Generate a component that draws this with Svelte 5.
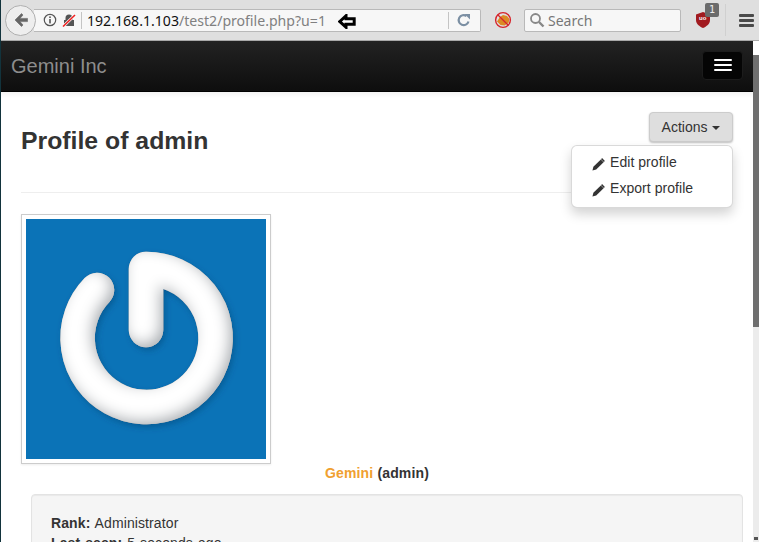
<script>
	let name = 'Gemini'
	let login = 'admin'
	let actions = ['Edit profile', 'Export profile']
</script>

<div class="window">
	<header class="toolbar">
		<button class="back" aria-label="Back">
			<svg width="14" height="14" viewBox="0 0 14 14"><path d="M7.500 0.500 1 7l6.500 6.500 1.500-1.500-3-3.400h7.500V5.400H6L9 2z" fill="#666" stroke="#666" stroke-width="0.600"/></svg>
		</button>
		<div class="urlbar">
			<svg class="info" width="14" height="14" viewBox="0 0 14 14">
				<circle cx="7" cy="7" r="5.700" fill="none" stroke="#555" stroke-width="1.200"/>
				<rect x="6.200" y="6" width="1.600" height="4.400" fill="#555"/>
				<rect x="6.200" y="3.400" width="1.600" height="1.600" fill="#555"/>
			</svg>
			<svg class="lock" width="14" height="14" viewBox="0 0 14 14">
				<path d="M2 13V7h1.500V5a3.500 3.500 0 0 1 7 0v2H12v6z" fill="#555"/>
				<path d="M1 13.500 13 2" stroke="#fff" stroke-width="3"/>
				<path d="M1 13.500 13 2" stroke="#e22" stroke-width="1.600"/>
			</svg>
			<span class="sep"></span>
			<span class="url"><b>192.168.1.103</b>/test2/profile.php?u=1</span>
			<svg class="cursor" width="18" height="15" viewBox="0 0 18 15">
				<path d="M1.800 7.500 8 1.800v3h8.200v5.400H8v3z" fill="#fff" stroke="#000" stroke-width="3"/>
			</svg>
			<span class="grow"></span>
			<span class="sep"></span>
			<svg class="reload" width="14" height="14" viewBox="0 0 14 14">
				<path d="M11.500 8.500A5 5 0 1 1 9.500 3" fill="none" stroke="#7b8fa3" stroke-width="2.200"/>
				<path d="M7.500 1h5.500v5.500z" fill="#7b8fa3"/>
			</svg>
		</div>
		<svg class="noscript" width="18" height="18" viewBox="0 0 18 18">
			<path d="M3 10.500 6 6l3-2 4 1 2.500 3-1 4-4 2.500-4-.5z" fill="#dc8a24"/>
			<circle cx="9" cy="9" r="7.400" fill="none" stroke="#d6232a" stroke-width="1.400"/>
			<path d="M4 4l10 10" stroke="#d6232a" stroke-width="1.200"/>
		</svg>
		<div class="search">
			<svg width="16" height="16" viewBox="0 0 16 16">
				<circle cx="6.500" cy="6.500" r="4.500" fill="none" stroke="#888" stroke-width="1.800"/>
				<path d="M10 10l4.500 4.500" stroke="#888" stroke-width="2.400"/>
			</svg>
			<span>Search</span>
		</div>
		<div class="ublock">
			<svg width="14" height="16" viewBox="0 0 14 16">
				<path d="M0 2.500 7 0l7 2.500V8c0 4-3.500 6.500-7 8-3.500-1.500-7-4-7-8z" fill="#a11a1f"/>
			</svg>
			<span class="uo">uo</span>
			<span class="count">1</span>
		</div>
		<span class="divider"></span>
		<div class="menu-icon" aria-label="Menu"><i></i><i></i><i></i></div>
	</header>

	<div class="viewport">
		<main class="page">
			<nav class="navbar">
				<span class="brand">Gemini Inc</span>
				<button class="toggle" aria-label="Toggle"><i></i><i></i><i></i></button>
			</nav>

			<div class="content">
				<div class="page-header">
					<h1>Profile of {login}</h1>
					<div class="actions">
						<button class="btn">Actions <span class="caret"></span></button>
						<ul class="dropdown">
							{#each actions as action}
								<li>
									<svg width="13" height="13" viewBox="0 0 14 14">
										<path d="M0.500 13.500 1.500 9.500 9.500 1.500 12.500 4.500 4.500 12.500z" fill="#333"/>
										<path d="M10.300 0.700 13.300 3.700" stroke="#333" stroke-width="1.600"/>
									</svg>
									<span>{action}</span>
								</li>
							{/each}
						</ul>
					</div>
				</div>

				<div class="thumb">
					<svg width="240" height="240" viewBox="0 0 240 240">
						<defs>
							<filter id="soft" x="-20%" y="-20%" width="140%" height="140%">
								<feGaussianBlur in="SourceAlpha" stdDeviation="7" result="blur"/>
								<feOffset in="blur" dx="-4" dy="-4" result="off"/>
								<feComposite in="SourceAlpha" in2="off" operator="out" result="edge"/>
								<feFlood flood-color="#6b7680" flood-opacity="0.7"/>
								<feComposite in2="edge" operator="in" result="shade"/>
								<feDropShadow in="SourceAlpha" dx="2" dy="3" stdDeviation="3" flood-color="#04406e" flood-opacity="0.45" result="drop"/>
								<feMerge>
									<feMergeNode in="drop"/>
									<feMergeNode in="SourceGraphic"/>
									<feMergeNode in="shade"/>
								</feMerge>
							</filter>
						</defs>
						<rect width="240" height="240" fill="#0b73b7"/>
						<path d="M71 71A69 69 0 1 0 120 50L120 111" fill="none" stroke="#fff" stroke-width="34.500" stroke-linecap="round" stroke-linejoin="round" filter="url(#soft)"/>
					</svg>
				</div>

				<p class="name"><span class="fname">{name}</span> ({login})</p>

				<section class="well">
					<p><b>Rank:</b> Administrator</p>
					<p><b>Last seen:</b> 5 seconds ago</p>
				</section>
			</div>
		</main>
		<aside class="scrollbar">
			<span class="arrow"></span>
			<span class="bar"></span>
			<span class="tick"></span>
		</aside>
	</div>
</div>

<style>
	:global(body) {
		margin: 0;
		overflow: hidden;
	}
	.window {
		width: 759px;
		height: 542px;
		box-sizing: border-box;
		display: flex;
		flex-direction: column;
		overflow: hidden;
		background: #fff;
		border-left: 1px solid #12333c;
		font-family: "Liberation Sans", Arial, sans-serif;
		color: #333;
	}

	/* browser chrome */
	.toolbar {
		height: 40px;
		flex: none;
		box-sizing: border-box;
		display: flex;
		align-items: center;
		background: #dfdfdf;
		padding: 0 0 0 4px;
		font-family: "Noto Sans", "Open Sans", sans-serif;
	}
	.back {
		width: 31px;
		height: 31px;
		flex: none;
		padding: 0;
		border: 1px solid #b0b0b0;
		border-radius: 50%;
		background: #eeeeee;
		display: flex;
		align-items: center;
		justify-content: center;
		position: relative;
		z-index: 1;
		margin-right: -2px;
	}
	.urlbar {
		width: 447px;
		height: 23px;
		box-sizing: border-box;
		flex: none;
		display: flex;
		align-items: center;
		background: #f7f7f7;
		border: 1px solid #b9b9b9;
		border-left: 0;
		border-radius: 0 2px 2px 0;
		padding-left: 9px;
	}
	.info { margin-right: 5px; }
	.lock { margin-right: 5px; }
	.sep {
		width: 1px;
		height: 17px;
		background: #c4c4c4;
		flex: none;
	}
	.url {
		font-size: 14.100px;
		color: #808080;
		margin-left: 5px;
		white-space: nowrap;
	}
	.url b {
		font-weight: 400;
		color: #111;
	}
	.cursor {
		margin: 2px 0 0 12px;
	}
	.grow { flex: 1; }
	.reload { margin: 0 9px 0 8px; }
	.noscript {
		margin-left: 13px;
		flex: none;
	}
	.search {
		width: 157px;
		height: 23px;
		box-sizing: border-box;
		flex: none;
		margin-left: 12px;
		display: flex;
		align-items: center;
		gap: 3px;
		padding-left: 4px;
		background: #f7f7f7;
		border: 1px solid #b9b9b9;
		border-radius: 2px;
		font-size: 14px;
		color: #777;
	}
	.ublock {
		position: relative;
		width: 14px;
		height: 16px;
		margin-left: 15px;
		flex: none;
	}
	.ublock svg { display: block; }
	.uo {
		position: absolute;
		left: 3px;
		top: 3px;
		font: bold 6px "Liberation Sans", sans-serif;
		color: #fff;
	}
	.count {
		position: absolute;
		left: 9px;
		top: -9px;
		width: 14px;
		height: 14px;
		background: #6b6b6b;
		border-radius: 2px;
		color: #eee;
		font: 10px/14px "DejaVu Sans Mono", monospace;
		text-align: center;
	}
	.divider {
		width: 1px;
		height: 32px;
		background: #d0d0d0;
		margin-left: 15px;
		flex: none;
	}
	.menu-icon {
		margin-left: 13px;
		width: 15px;
		display: flex;
		flex-direction: column;
		gap: 2px;
	}
	.menu-icon i {
		height: 3px;
		background: #4a4a4a;
		border-radius: 1px;
	}

	/* page */
	.viewport {
		flex: 1;
		min-height: 0;
		display: flex;
		border-top: 1px solid #a8a8a8;
	}
	.page {
		flex: 1;
		min-width: 0;
		overflow: hidden;
	}
	.navbar {
		height: 51px;
		box-sizing: border-box;
		display: flex;
		align-items: center;
		justify-content: space-between;
		padding: 0 10px 2px 10px;
		background: linear-gradient(#222, #0e0e0e);
		border-bottom: 1px solid #000;
	}
	.brand {
		font-size: 20px;
		color: #8d8d8d;
		margin-top: 2px;
	}
	.toggle {
		width: 41px;
		height: 29px;
		box-sizing: border-box;
		padding: 0;
		border: 1px solid #1c1c1c;
		border-radius: 4px;
		background: #050505;
		display: flex;
		flex-direction: column;
		align-items: center;
		justify-content: center;
		gap: 3px;
	}
	.toggle i {
		width: 18px;
		height: 2px;
		background: #fff;
		border-radius: 1px;
	}
	.content {
		padding: 0 20px;
		background: linear-gradient(#f3f3f3, #fff 6px);
	}
	.page-header {
		position: relative;
		display: flex;
		justify-content: space-between;
		align-items: flex-start;
		height: 101px;
		box-sizing: border-box;
		border-bottom: 1px solid #eee;
		margin-bottom: 21px;
	}
	h1 {
		margin: 36px 0 0;
		font-size: 24.800px;
		line-height: 26px;
		font-weight: 700;
		color: #333;
	}
	.actions {
		margin-top: 20px;
		position: relative;
	}
	.btn {
		display: block;
		width: 84px;
		height: 30px;
		padding: 0;
		box-sizing: border-box;
		border: 1px solid #ccc;
		border-radius: 4px;
		background: #dedede;
		box-shadow: 0 1px 2px rgba(0, 0, 0, .25);
		font: 14px "Liberation Sans", Arial, sans-serif;
		color: #333;
	}
	.caret {
		display: inline-block;
		width: 0;
		height: 0;
		margin-left: 1px;
		vertical-align: middle;
		border-top: 4px solid #333;
		border-left: 4px solid transparent;
		border-right: 4px solid transparent;
	}
	.dropdown {
		position: absolute;
		top: 33px;
		right: 0;
		width: 162px;
		height: 63px;
		box-sizing: border-box;
		margin: 0;
		padding: 3px 0 0 20px;
		list-style: none;
		background: #fff;
		border: 1px solid rgba(0, 0, 0, .15);
		border-radius: 6px;
		box-shadow: 0 6px 12px rgba(0, 0, 0, .175);
		font-size: 14px;
	}
	.dropdown li {
		display: flex;
		align-items: center;
		height: 26px;
		gap: 5px;
	}
	.dropdown li span { letter-spacing: .05px; }
	.dropdown li svg { margin-top: 4px; }
	.thumb {
		width: 250px;
		height: 250px;
		box-sizing: border-box;
		padding: 4px;
		background: #fff;
		border: 1px solid #ccc;
		box-shadow: 0 1px 2px rgba(0, 0, 0, .075);
	}
	.thumb svg { display: block; }
	.name {
		margin: 0;
		height: 30px;
		text-align: center;
		font-size: 14px;
		line-height: 18px;
		font-weight: 700;
		letter-spacing: .15px;
	}
	.fname { color: #f0a030; }
	.well {
		margin: 0 -10px 0 10px;
		padding: 18px 19px;
		min-height: 100px;
		background: #f5f5f5;
		border: 1px solid #e3e3e3;
		border-radius: 4px;
		box-shadow: inset 0 1px 1px rgba(0, 0, 0, .05);
		font-size: 14px;
		line-height: 20px;
		letter-spacing: .1px;
		word-spacing: 1px;
	}
	.well p { margin: 0; }
	.scrollbar {
		width: 6px;
		flex: none;
		background: #ececec;
		position: relative;
	}
	.arrow {
		display: block;
		height: 14px;
		background: #fff;
	}
	.bar {
		display: block;
		height: 272px;
		background: #6f6f6f;
	}
	.tick {
		position: absolute;
		left: 1px;
		bottom: 2px;
		width: 4px;
		height: 3px;
		background: #555;
	}
</style>
